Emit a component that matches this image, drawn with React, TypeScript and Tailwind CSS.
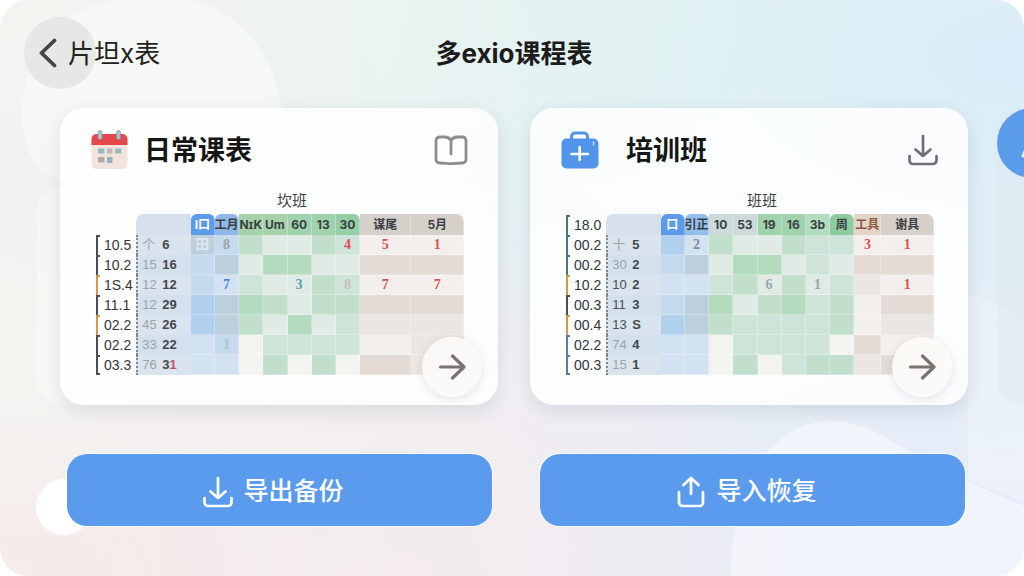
import { type ReactNode } from "react";
import clsx from "clsx";

type Mark = { text: string; tone: string };

type Row = {
  time: string;
  bracket: string;
  week: string;
  weekTone: string;
  day: ReactNode;
  // one shade key for each lesson column
  shades: string;
  marks?: Record<number, Mark>;
};

type HeadCell = { label: string; width: string; className: string };

type Schedule = {
  caption: string;
  headTime?: string;
  head: HeadCell[];
  rows: Row[];
};

const shadeClass: Record<string, string> = {
  b1: "bg-[#d3e2f2]",
  b2: "bg-[#c6daee]",
  b3: "bg-[#bccfdd]",
  b4: "bg-[#b0d0ee]",
  g0: "bg-[#f3f4f0]",
  g1: "bg-[#dfebe4]",
  g2: "bg-[#cfe4d8]",
  g3: "bg-[#c2dfcc]",
  g4: "bg-[#b3dbbd]",
  t0: "bg-[#f2efec]",
  t1: "bg-[#ebe6e1]",
  t2: "bg-[#e4dcd4]",
};

const RED = "text-[#dc5257]";
const GRAY = "text-[#9aa5a8]";
const INK = "text-[#4a4e54]";
const DARK = "border-[#4b4f55]";
const ORANGE = "border-[#d39a45]";
const TEAL = "border-[#4b7480]";
const SLATE = "border-[#5d7c98]";

const daily: Schedule = {
  caption: "坎班",
  head: [
    { label: "I口", width: "w-6", className: "rounded-t-md bg-[#5b9bea] text-white" },
    { label: "工月", width: "w-6", className: "rounded-t-md bg-[#8fb8e8]" },
    { label: "NɪK", width: "w-6", className: "bg-[#a5d2a8]" },
    { label: "Um", width: "w-6", className: "bg-[#a5d2a8]" },
    { label: "60", width: "w-6", className: "bg-[#a0d3ad]" },
    { label: "13", width: "w-6", className: "bg-[#a0d3ad]" },
    { label: "30", width: "w-6", className: "rounded-tr-md bg-[#96cea6]" },
    { label: "谋尾", width: "w-[51px]", className: "bg-[#d6d0cb]" },
    { label: "5月", width: "w-[52px]", className: "rounded-tr-lg bg-[#d6d0cb]" },
  ],
  rows: [
    {
      time: "10.5", bracket: DARK, week: "个", weekTone: GRAY, day: "6",
      shades: "b3 b2 g3 g1 g1 g3 g2 t0 t0",
      marks: {
        0: { text: "田", tone: "text-[#dce6ee]" },
        1: { text: "8", tone: GRAY },
        6: { text: "4", tone: RED },
        7: { text: "5", tone: RED },
        8: { text: "1", tone: RED },
      },
    },
    { time: "10.2", bracket: DARK, week: "15", weekTone: GRAY, day: "16", shades: "b2 b3 g1 g4 g4 g1 g1 t2 t2" },
    {
      time: "1S.4", bracket: ORANGE, week: "12", weekTone: GRAY, day: "12",
      shades: "b2 b1 g2 g1 g1 g3 g2 t0 t0",
      marks: {
        1: { text: "7", tone: "text-[#4d86e8]" },
        4: { text: "3", tone: "text-[#55a3b0]" },
        6: { text: "8", tone: "text-[#c9bfc0]" },
        7: { text: "7", tone: RED },
        8: { text: "7", tone: RED },
      },
    },
    { time: "11.1", bracket: DARK, week: "12", weekTone: GRAY, day: "29", shades: "b4 b3 g4 g3 g1 g3 g3 t2 t2" },
    { time: "02.2", bracket: ORANGE, week: "45", weekTone: GRAY, day: "26", shades: "b4 b3 g3 g1 g4 g1 g2 t1 t1" },
    {
      time: "02.2", bracket: DARK, week: "33", weekTone: GRAY, day: "22",
      shades: "b1 b2 g0 g2 g2 g2 g2 t0 t1",
      marks: { 1: { text: "1", tone: "text-[#aebfcd]" } },
    },
    {
      time: "03.3", bracket: DARK, week: "76", weekTone: GRAY,
      day: <>3<span className="text-[#c8505f]">1</span></>,
      shades: "b1 b1 g0 g3 g0 g3 g0 t2 t1",
    },
  ],
};

const training: Schedule = {
  caption: "班班",
  headTime: "18.0",
  head: [
    { label: "口", width: "w-6", className: "rounded-t-md bg-[#5b9bea] text-white" },
    { label: "引正", width: "w-6", className: "rounded-t-md bg-[#93bdea]" },
    { label: "10", width: "w-6", className: "bg-[#ccdbda]" },
    { label: "53", width: "w-6", className: "bg-[#ccdbda]" },
    { label: "19", width: "w-6", className: "bg-[#a0d3ad]" },
    { label: "16", width: "w-6", className: "bg-[#a0d3ad]" },
    { label: "3b", width: "w-6", className: "bg-[#b4dcbf]" },
    { label: "周", width: "w-6", className: "rounded-t-md bg-[#8ecb9d]" },
    { label: "工具", width: "w-[27px]", className: "bg-[#e3d3c8] text-[#8a5a3c]" },
    { label: "谢具", width: "w-[52px]", className: "rounded-tr-lg bg-[#d6d0cb]" },
  ],
  rows: [
    {
      time: "00.2", bracket: TEAL, week: "十", weekTone: GRAY, day: "5",
      shades: "b4 b1 g3 g1 g1 g3 g2 g2 t0 t0",
      marks: {
        1: { text: "2", tone: "text-[#7d8e9b]" },
        8: { text: "3", tone: RED },
        9: { text: "1", tone: RED },
      },
    },
    { time: "00.2", bracket: TEAL, week: "30", weekTone: GRAY, day: "2", shades: "b2 b3 g1 g4 g4 g1 g2 g1 t2 t2" },
    {
      time: "10.2", bracket: ORANGE, week: "10", weekTone: INK, day: "2",
      shades: "b1 b1 g2 g3 g1 g3 g1 g2 t1 t0",
      marks: {
        4: { text: "6", tone: GRAY },
        6: { text: "1", tone: GRAY },
        9: { text: "1", tone: RED },
      },
    },
    { time: "00.3", bracket: DARK, week: "11", weekTone: INK, day: "3", shades: "b2 b3 g4 g1 g3 g4 g2 g3 t0 t2" },
    { time: "00.4", bracket: ORANGE, week: "13", weekTone: INK, day: "S", shades: "b4 b3 g3 g2 g2 g2 g2 g3 t0 t1" },
    { time: "02.2", bracket: SLATE, week: "74", weekTone: GRAY, day: "4", shades: "b1 b1 g0 g2 g2 g2 g2 g0 t2 t0" },
    { time: "00.3", bracket: SLATE, week: "15", weekTone: GRAY, day: "1", shades: "b1 b1 g0 g3 g0 g2 g3 g3 t1 t2" },
  ],
};

function CalendarIcon() {
  return (
    <svg viewBox="0 0 37 40" className="h-10 w-[37px]" aria-hidden="true">
      <rect x="0.5" y="6" width="36" height="33" rx="5" fill="#f3e3dd" />
      <path d="M.5 15v-6a5 5 0 0 1 5-5h26a5 5 0 0 1 5 5v6z" fill="#e5484a" />
      <rect x="7" y="0.5" width="4" height="9" rx="2" fill="#a9c6cf" stroke="#7d9ba6" strokeWidth="0.7" />
      <rect x="25.5" y="0.5" width="4" height="9" rx="2" fill="#a9c6cf" stroke="#7d9ba6" strokeWidth="0.7" />
      <rect x="7" y="18.5" width="6.5" height="5" fill="#94bcc6" />
      <rect x="16" y="18.5" width="5.5" height="5" fill="#bdb7b8" />
      <rect x="24" y="18.5" width="6.5" height="5" fill="#9dbac5" />
      <rect x="7" y="27" width="6.5" height="5.5" fill="#b1a9a7" />
      <rect x="16" y="27" width="5.5" height="6" fill="#93b2bd" />
    </svg>
  );
}

function KitIcon() {
  return (
    <svg viewBox="0 0 38 38" className="size-[38px]" fill="none" aria-hidden="true">
      <path d="M10.5 9V5.5A3.500 3.500 0 0 1 14 2h9a3.500 3.500 0 0 1 3.500 3.500V9" stroke="#5294ea" strokeWidth="3" />
      <rect x="0.5" y="7.5" width="37" height="30" rx="5" fill="#5294ea" />
      <path d="M10.5 23H27M18.700 16v13" stroke="white" strokeWidth="2.600" strokeLinecap="round" />
      <path d="M32.500 11v3" stroke="#d6e7fd" strokeWidth="1.400" strokeLinecap="round" />
    </svg>
  );
}

function BookIcon() {
  return (
    <svg viewBox="0 0 34 30" className="h-[30px] w-[34px]" fill="none" stroke="#8d8d8d" strokeWidth="2.800" strokeLinecap="round" strokeLinejoin="round" aria-hidden="true">
      <path d="M17 5.500C15.500 3 13.500 2 11 2H5.500A3.500 3.500 0 0 0 2 5.500v19A3.500 3.500 0 0 0 5.500 28c5 0 8 .6 11.500.6s6.500-.6 11.500-.6a3.500 3.500 0 0 0 3.500-3.500v-19A3.500 3.500 0 0 0 28.500 2H23c-2.500 0-4.500 1-6 3.500z" />
      <path d="M17 7v12" />
    </svg>
  );
}

function TrayIcon({ up, className }: { up?: boolean; className: string }) {
  return (
    <svg viewBox="0 0 30 32" className={clsx("h-8 w-[30px]", className)} fill="none" stroke="currentColor" strokeWidth="2.700" strokeLinecap="round" strokeLinejoin="round" aria-hidden="true">
      {up ? <path d="M15 18V2M7.500 9 15 2l7.500 7" /> : <path d="M15 2v20M7.500 15.500 15 22l7.500-6.500" />}
      <path d={up ? "M3 16v10.500A3.500 3.500 0 0 0 6.500 30h17a3.500 3.500 0 0 0 3.500-3.500V16" : "M1.500 22v4.500A3.500 3.500 0 0 0 5 30h20a3.500 3.500 0 0 0 3.500-3.500V22"} />
    </svg>
  );
}

function TimeLabel({ tone, time, last }: { tone: string; time: string; last?: boolean }) {
  return (
    <div className="flex items-center gap-1 font-['Liberation_Sans',sans-serif] text-sm leading-5 font-normal text-[#34363a]">
      <span className={clsx("h-5 w-1 border-t-2 border-l-2", tone, last && "border-b-2")} />
      {time}
    </div>
  );
}

function ScheduleTable({ schedule }: { schedule: Schedule }) {
  return (
    <table className="w-full table-fixed border-separate border-spacing-0">
      <caption className="h-[27px] pt-0.5 pl-6 text-[15px] leading-6 text-[#3c3e42]">{schedule.caption}</caption>
      <thead>
        <tr className="h-[21px]">
          <th scope="col" className="w-10 p-0">
            {schedule.headTime && <TimeLabel tone={TEAL} time={schedule.headTime} />}
          </th>
          <td className="w-[54px] rounded-tl-lg bg-[#d5e0ec] p-0" />
          {schedule.head.map((cell, i) => (
            <th
              key={i}
              scope="col"
              className={clsx(
                "border-r border-white/30 p-0 text-xs leading-5 font-bold whitespace-nowrap",
                !cell.className.includes("text-") && "text-[#3a4044]",
                cell.width,
                cell.className,
              )}
            >
              <div className="flex justify-center">{cell.label}</div>
            </th>
          ))}
        </tr>
      </thead>
      <tbody>
        {schedule.rows.map((row, i) => (
          <tr key={i} className="h-5">
            <th scope="row" className="p-0">
              <TimeLabel tone={row.bracket} time={row.time} last={i === schedule.rows.length - 1} />
            </th>
            <td className={clsx("border-l-2 border-dotted border-[#7f868d] p-0", i % 2 ? "bg-[#d3e1ed]" : "bg-[#dae4ef]")}>
              <div className="flex gap-1 pl-1 font-['Liberation_Sans','Noto_Sans_CJK_SC',sans-serif] text-[13px] leading-5">
                <span className={clsx("w-4", row.weekTone)}>{row.week}</span>
                <span className="font-bold text-[#44474c]">{row.day}</span>
              </div>
            </td>
            {row.shades.split(" ").map((shade, j) => (
              <td
                key={j}
                className={clsx(
                  "border-r border-b border-white/30 p-0 text-center font-['Liberation_Serif','Noto_Sans_CJK_SC',serif] text-sm leading-[19px] font-bold",
                  shadeClass[shade],
                  row.marks?.[j]?.tone,
                )}
              >
                {row.marks?.[j]?.text}
              </td>
            ))}
          </tr>
        ))}
      </tbody>
    </table>
  );
}

function ScheduleCard({
  title,
  icon,
  action,
  actionLabel,
  schedule,
  wide,
}: {
  title: string;
  icon: ReactNode;
  action: ReactNode;
  actionLabel: string;
  schedule: Schedule;
  wide?: boolean;
}) {
  return (
    <section className="relative rounded-3xl bg-white/85 pt-5 pb-[30px] shadow-[0_6px_18px_rgba(90,105,125,0.16)]">
      <div className={clsx("flex h-11 items-center pr-[30px] pl-[31px]", wide ? "gap-[27px]" : "gap-4")}>
        {icon}
        <h2 className="pt-0.5 text-[27px] leading-10 font-bold text-[#161616]">{title}</h2>
        <button type="button" aria-label={actionLabel} className="ml-auto">
          {action}
        </button>
      </div>
      <div className="mt-[15px] pr-[34px] pl-9">
        <ScheduleTable schedule={schedule} />
      </div>
      <button
        type="button"
        aria-label={`打开${title}`}
        className="absolute right-4 bottom-2 flex size-[60px] items-center justify-center rounded-full bg-[#fbfaf8]/95 shadow-[0_2px_8px_rgba(90,95,105,0.16)]"
      >
        <svg viewBox="0 0 28 28" className="size-7" fill="none" stroke="#777472" strokeWidth="3.200" strokeLinecap="round" strokeLinejoin="round" aria-hidden="true">
          <path d="M2.500 14h23M14.500 3 26 14 14.500 25" />
        </svg>
      </button>
    </section>
  );
}

function Backdrop() {
  return (
    <svg viewBox="0 0 1024 576" preserveAspectRatio="none" className="absolute inset-0 h-full w-full" aria-hidden="true">
      <path d="M22 120C20 60 60 0 130 0h60c50 10 86 55 94 118v60H60c-24 0-36-28-38-58z" fill="white" opacity="0.4" />
      <path d="M730 576c4-60 16-112 46-132 30-30 70-30 110-6 50 30 90 48 138 68v70z" fill="white" opacity="0.45" />
      <path d="M968 294c24 4 44 16 56 28v180c-22-8-40-15-56-22z" fill="white" opacity="0.22" />
      <circle cx="64" cy="507" r="28" fill="white" />
    </svg>
  );
}

const actionButton =
  "flex h-[72px] items-center justify-center gap-2.5 rounded-[20px] bg-[#5a9bee] pt-1 pr-3 text-[25px] font-medium text-white shadow-[0_0_0_1px_rgba(255,255,255,0.7)]";

export default function App() {
  return (
    <div className="bg-white font-['Inter','Noto_Sans_CJK_SC',sans-serif]">
      <main className="relative min-h-screen overflow-hidden rounded-[28px] bg-[#ecf0f5] bg-[radial-gradient(ellipse_at_0%_0%,#f2f5ef_0%,transparent_50%),radial-gradient(ellipse_at_0%_60%,#f5f5f1_0%,transparent_40%),radial-gradient(ellipse_at_0%_100%,#f6ece9_0%,transparent_55%),radial-gradient(ellipse_at_55%_0%,#dff3f1_0%,transparent_45%),radial-gradient(ellipse_at_100%_10%,#d9edf8_0%,transparent_55%),radial-gradient(ellipse_at_40%_100%,#f2ecf3_0%,transparent_45%),radial-gradient(ellipse_at_100%_100%,#e4ebfa_0%,transparent_45%)]">
        <Backdrop />
        <div className="absolute top-[186px] left-[37px] h-[219px] w-20 rounded-3xl bg-white/35" />
        <div className="absolute top-[108px] -right-12 h-[297px] w-[75px] rounded-3xl bg-[#dce6ee]/40" />
        <button
          type="button"
          aria-label="新建课表"
          className="absolute top-[108px] -right-[43px] size-[70px] rounded-full bg-[#5a9bea]"
        >
          <svg viewBox="0 0 70 70" className="size-full" fill="none" stroke="#e3eefc" strokeWidth="3" strokeLinecap="round" aria-hidden="true">
            <path d="M26 48 35 27l9 21" />
          </svg>
        </button>

        <div className="relative">
          <header className="grid grid-cols-[1fr_auto_1fr] items-center pt-[17px] pr-5 pl-6">
            <button type="button" className="flex items-center justify-self-start text-[26px] text-[#222]">
              <span className="flex size-[72px] items-center justify-center rounded-full bg-[#e5e8e5] pr-6">
                <svg viewBox="0 0 18 30" className="h-[30px] w-[18px]" fill="none" stroke="#444" strokeWidth="3.800" strokeLinecap="round" strokeLinejoin="round" aria-hidden="true">
                  <path d="M15.500 2.500 2.500 15l13 12.500" />
                </svg>
              </span>
              <span className="-ml-7">片坦x表</span>
            </button>
            <h1 className="text-[26px] font-bold text-[#1c1c1c]">多exio课程表</h1>
          </header>

          <div className="mt-[19px] grid grid-cols-2 gap-8 pr-14 pl-[60px]">
            <ScheduleCard title="日常课表" icon={<CalendarIcon />} action={<BookIcon />} actionLabel="查看课本" schedule={daily} />
            <ScheduleCard
              title="培训班"
              icon={<KitIcon />}
              action={<TrayIcon className="text-[#6d7073]" />}
              actionLabel="下载"
              schedule={training}
              wide
            />
          </div>

          <div className="mt-[49px] grid grid-cols-2 gap-12 pr-[59px] pb-12 pl-[67px]">
            <button type="button" className={actionButton}>
              <TrayIcon className="text-white" />
              导出备份
            </button>
            <button type="button" className={actionButton}>
              <TrayIcon up className="text-white" />
              导入恢复
            </button>
          </div>
        </div>
      </main>
    </div>
  );
}
